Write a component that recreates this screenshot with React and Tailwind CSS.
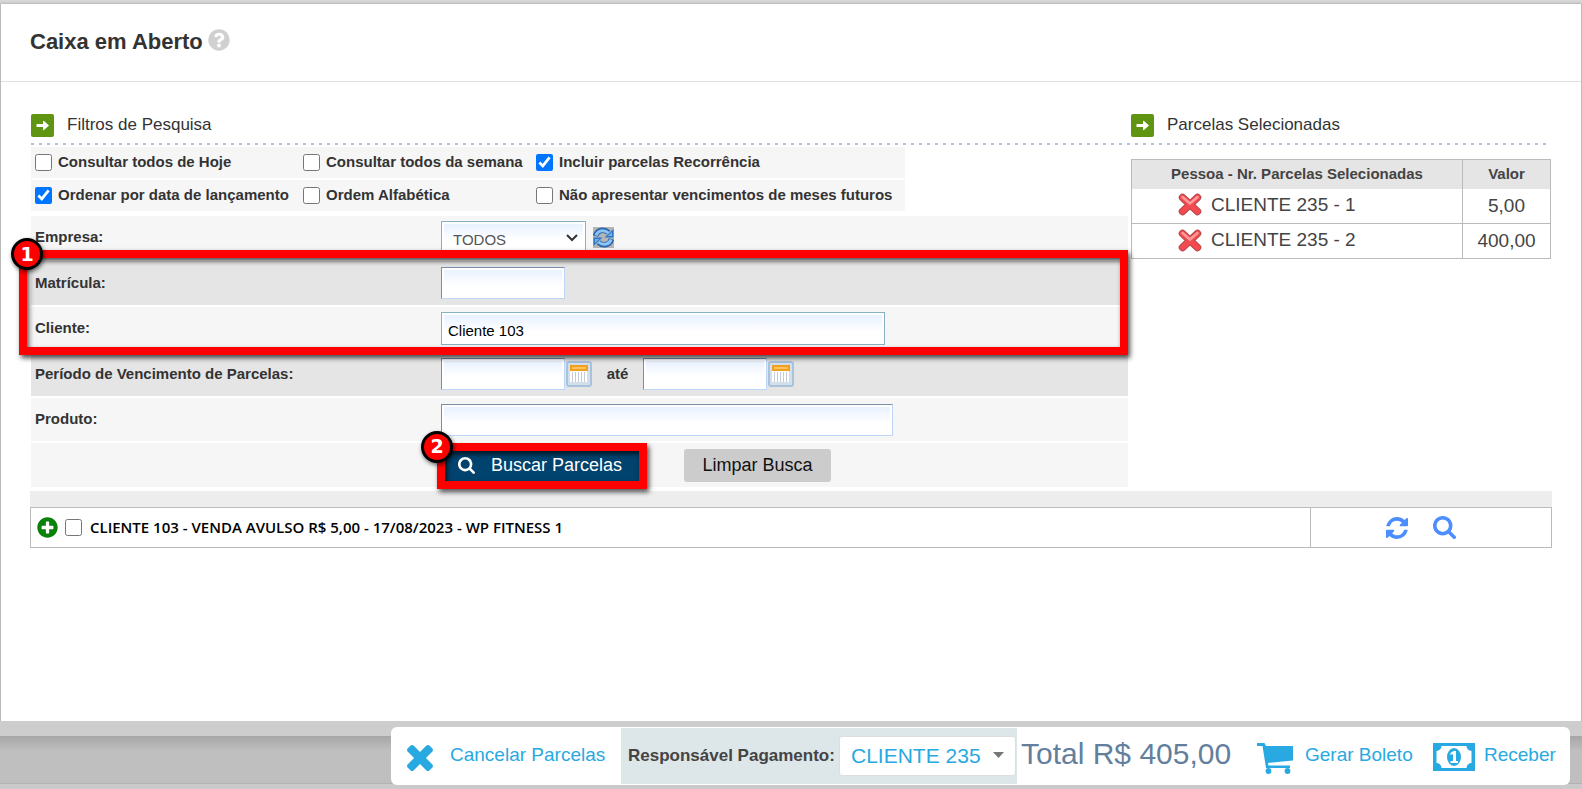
import React, { useState } from 'react';
import { FaQuestionCircle, FaPlusCircle } from 'react-icons/fa';

const selecionadas = [
  { id: 1, pessoa: 'CLIENTE 235 - 1', valor: '5,00' },
  { id: 2, pessoa: 'CLIENTE 235 - 2', valor: '400,00' },
];

const opcoes = [
  { id: 'hoje', label: 'Consultar todos de Hoje' },
  { id: 'semana', label: 'Consultar todos da semana' },
  { id: 'recorrencia', label: 'Incluir parcelas Recorrência' },
  { id: 'lancamento', label: 'Ordenar por data de lançamento' },
  { id: 'alfabetica', label: 'Ordem Alfabética' },
  { id: 'futuros', label: 'Não apresentar vencimentos de meses futuros' },
];

const inputClass =
  'h-8 border border-t-[#7b8ea8] border-l-[#7b8ea8] border-r-[#bed6f8] border-b-[#bed6f8] bg-linear-to-b from-[#e6f0ff] to-white to-60% px-[6px] pt-1 text-[15px] text-black shadow-[inset_0_0_0_2px_#fff] outline-none';

function SearchIcon({ className }) {
  return (
    <svg viewBox="0 128 1664 1664" className={className} fill="currentColor" aria-hidden="true">
      <path d="M1152 832q0-185-131.5-316.5t-316.5-131.5-316.5 131.5-131.5 316.5 131.5 316.5 316.5 131.5 316.5-131.5 131.5-316.5zm512 832q0 54-38 90-36 38-90 38-54 0-90-38l-343-342q-179 124-399 124-143 0-273.5-55.5t-225-150-150-225-55.5-273.5 55.5-273.5 150-225 225-150 273.5-55.5 273.5 55.5 225 150 150 225 55.5 273.5q0 220-124 399l343 343q37 37 37 90z" />
    </svg>
  );
}

function RefreshIcon({ className }) {
  return (
    <svg viewBox="0 128 1536 1536" className={className} fill="currentColor" aria-hidden="true">
      <path d="M1511 1056q0 5-1 7-64 268-268 434.5t-478 166.5q-146 0-282.5-55t-243.5-157l-129 129q-19 19-45 19t-45-19-19-45v-448q0-26 19-45t45-19h448q26 0 45 19t19 45-19 45l-137 137q71 66 161 102t187 36q134 0 250-65t186-179q11-17 53-117 8-23 30-23h192q13 0 22.5 9.5t9.5 22.5zm25-800v448q0 26-19 45t-45 19h-448q-26 0-45-19t-19-45 19-45l138-138q-148-137-349-137-134 0-250 65t-186 179q-11 17-53 117-8 23-30 23h-199q-13 0-22.5-9.5t-9.5-22.5v-7q65-268 270-434.5t480-166.5q146 0 284 55.5t245 156.5l130-129q19-19 45-19t45 19 19 45z" />
    </svg>
  );
}

function TimesIcon({ className }) {
  return (
    <svg viewBox="110 366 1188 1188" className={className} fill="currentColor" aria-hidden="true">
      <path d="M1298 1322q0 40-28 68l-136 136q-28 28-68 28t-68-28l-294-294-294 294q-28 28-68 28t-68-28l-136-136q-28-28-28-68t28-68l294-294-294-294q-28-28-28-68t28-68l136-136q28-28 68-28t68 28l294 294 294-294q28-28 68-28t68 28l136 136q28 28 28 68t-28 68l-294 294 294 294q28 28 28 68z" />
    </svg>
  );
}

function CartIcon({ className }) {
  return (
    <svg viewBox="0 0 36 31" className={className} fill="currentColor" aria-hidden="true">
      <path d="M0 0h7.500L9 3h27v14.500L11 20l.5 2.500H33V25H9L5.500 3H0z" />
      <circle cx="11.500" cy="28" r="2.900" />
      <circle cx="30.500" cy="28" r="2.900" />
    </svg>
  );
}

function MoneyIcon({ className }) {
  return (
    <svg viewBox="0 0 42 28" className={className} aria-hidden="true">
      <path fill="currentColor" d="M0 0h42v28H0z" />
      <path fill="#fff" d="M8.500 3h25a5 5 0 0 0 5 5v12a5 5 0 0 0-5 5h-25a5 5 0 0 0-5-5V8a5 5 0 0 0 5-5z" />
      <ellipse cx="21" cy="14" rx="7" ry="9" fill="currentColor" />
      <path fill="#fff" d="M20.500 8h2.500v10h2v2h-7.500v-2h2.500v-7l-2.500 1v-2z" />
    </svg>
  );
}

function CalendarIcon() {
  return (
    <svg viewBox="0 0 26 26" className="size-[26px]" aria-hidden="true">
      <rect x="1" y="1" width="24" height="24" rx="2" fill="#d3dfeb" stroke="#a9c3dd" strokeWidth="2" />
      <path fill="#fff" d="M4 10h17v11H4z" />
      <path stroke="#c3cad3" strokeWidth="1" d="M6.500 11v10M9.500 11v10M12.500 11v10M15.500 11v10M18.500 11v10" />
      <path fill="#f0a01e" d="M4 4h18v6H4z" />
      <path fill="#fac45a" d="M6 6h14v2H6z" />
    </svg>
  );
}

function RedCross() {
  return (
    <svg viewBox="0 0 24 23" className="h-[23px] w-6" aria-hidden="true">
      <g fill="none" strokeLinecap="round">
        <path d="M4.500 4.500 19.500 18.500M19.500 4.500 4.500 18.500" stroke="#b5474a" strokeWidth="7.500" />
        <path d="M4.500 4.500 19.500 18.500M19.500 4.500 4.500 18.500" stroke="#f24a50" strokeWidth="5.500" />
        <path d="m4.500 4 7.500 6.500L19.500 4" stroke="#ff9a9a" strokeWidth="2.500" />
      </g>
    </svg>
  );
}

function SectionTitle({ children }) {
  return (
    <div className="flex h-[23px] items-center gap-[13px]">
      <svg viewBox="0 0 23 23" className="size-[23px]" aria-hidden="true">
        <rect width="23" height="23" rx="2" fill="#5f9512" />
        <path fill="#fff" d="M6 10h6V7.500q0-1 1-.5l5 4.500-5 4.500q-1 .5-1-.5V13H6q-.5 0-.5-.5v-2q0-.5.5-.5z" />
      </svg>
      <h2 className="pb-0.5 text-[17px] leading-5 text-[#333]">{children}</h2>
    </div>
  );
}

function Marker({ n, className }) {
  return (
    <span className={`absolute -top-5 flex size-8 items-center justify-center rounded-full border-[3px] border-black bg-[#f00] font-['DejaVu_Sans',sans-serif] text-[19px] font-bold text-white shadow-[1px_2px_4px_rgba(0,0,0,0.6)] ${className}`}>
      {n}
    </span>
  );
}

const frameClass =
  'pointer-events-none absolute border-8 border-[#f00] shadow-[2px_3px_5px_rgba(0,0,0,0.7),inset_2px_3px_5px_rgba(0,0,0,0.7)]';

function Row({ label, htmlFor, dark, children }) {
  return (
    <div className={`grid grid-cols-[406px_1fr] items-center pl-1 ${dark ? 'h-11 bg-[#e5e5e5]' : 'h-[43px] bg-[#f6f6f6]'}`}>
      <label htmlFor={htmlFor} className="text-[15px] font-bold">{label}</label>
      <div className="flex items-center">{children}</div>
    </div>
  );
}

export default function App() {
  const [marcados, setMarcados] = useState({ recorrencia: true, lancamento: true });
  const [form, setForm] = useState({ empresa: 'TODOS', matricula: '', cliente: 'Cliente 103', inicio: '', fim: '', produto: '' });

  const change = (e) => setForm({ ...form, [e.target.name]: e.target.value });
  const limpar = () => setForm({ empresa: 'TODOS', matricula: '', cliente: '', inicio: '', fim: '', produto: '' });

  return (
    <div className="flex min-h-screen flex-col bg-[#d8d8d8] pt-1 font-['Liberation_Sans',Arial,sans-serif] text-[#333]">
      <main className="flex-1 border-x border-[#bbb] bg-white shadow-[0_0_3px_rgba(0,0,0,0.3)]">
        <header className="flex h-[78px] items-center gap-[5px] border-b border-[#e0e0e0] px-[29px] pb-0.5">
          <h1 className="text-[22px] font-bold">Caixa em Aberto</h1>
          <button type="button" aria-label="Ajuda" className="pb-1 text-[#d0d0d0]">
            <FaQuestionCircle className="size-[22px]" />
          </button>
        </header>

        <div className="px-[30px] pt-8">
          <div className="grid grid-cols-[1fr_420px] gap-x-[3px]">
            <SectionTitle>Filtros de Pesquisa</SectionTitle>
            <SectionTitle>Parcelas Selecionadas</SectionTitle>
          </div>
          <div className="mt-1.5 mb-0.5 h-0.5 bg-[repeating-linear-gradient(to_right,#b0c4d8_0_3px,transparent_3px_8px)]" />

          <div className="grid grid-cols-[1fr_420px] items-start gap-x-[3px]">
            <form className="flex flex-col gap-0.5" onSubmit={(e) => e.preventDefault()}>
              <div className="mb-[3px] flex w-[874px] flex-col gap-0.5">
                {[opcoes.slice(0, 3), opcoes.slice(3)].map((linha, i) => (
                  <div key={i} className="grid h-[31px] grid-cols-[268px_233px_1fr] items-center bg-[#f6f6f6] pl-1">
                    {linha.map((o) => (
                      <label key={o.id} className="flex items-center gap-1.5 text-[15px] font-bold whitespace-nowrap">
                        <input
                          type="checkbox"
                          className="size-[17px]"
                          checked={!!marcados[o.id]}
                          onChange={(e) => setMarcados({ ...marcados, [o.id]: e.target.checked })}
                        />
                        {o.label}
                      </label>
                    ))}
                  </div>
                ))}
              </div>

              <Row label="Empresa:" htmlFor="empresa">
                <div className="relative">
                  <select
                    id="empresa"
                    name="empresa"
                    value={form.empresa}
                    onChange={change}
                    className="h-[33px] w-[145px] appearance-none border border-[#8ab0c4] bg-linear-to-b from-[#e6f0ff] to-white to-60% pt-1.5 pl-[11px] text-[15px] text-[#555] shadow-[inset_0_0_0_2px_#fff]"
                  >
                    <option>TODOS</option>
                  </select>
                  <svg viewBox="0 0 12 8" className="pointer-events-none absolute top-[13px] right-2 h-2 w-3" aria-hidden="true">
                    <path d="m1 1 5 5 5-5" fill="none" stroke="#333" strokeWidth="2" />
                  </svg>
                </div>
                <button type="button" aria-label="Atualizar empresas" className="ml-[7px]">
                  <svg viewBox="0 0 21 21" className="size-[21px]" aria-hidden="true">
                    <rect width="21" height="21" fill="#b5b5b5" />
                    <g fill="none" stroke="#2a66ad" strokeWidth="5.500">
                      <path d="M2.500 9C4 3 11 1.500 15.500 5.500" />
                      <path d="M18.500 12C17 18 10 19.500 5.500 15.500" />
                    </g>
                    <path d="M20.500 2v8.500h-9zM.5 19v-8.500h9z" fill="#2f78c8" />
                    <g fill="none" stroke="#8cc4f5" strokeWidth="3">
                      <path d="M3 8.500C4.500 3.500 11 2 15.500 6" />
                      <path d="M18 12.500C16.500 17.500 10 19 5.500 15" />
                    </g>
                    <path d="M19 5v4h-4.500zM2 16v-4h4.500z" fill="#6fb0ee" />
                  </svg>
                </button>
              </Row>

              <div className="relative flex flex-col gap-0.5">
                <Row label="Matrícula:" htmlFor="matricula" dark>
                  <input id="matricula" name="matricula" value={form.matricula} onChange={change} className={`${inputClass} w-[124px]`} />
                </Row>
                <Row label="Cliente:" htmlFor="cliente">
                  <input
                    id="cliente"
                    name="cliente"
                    value={form.cliente}
                    onChange={change}
                    className="h-[33px] w-[444px] border border-[#8ab0c4] bg-linear-to-b from-[#e6f0ff] to-white to-60% px-[6px] pt-1 text-[15px] text-black shadow-[inset_0_0_0_2px_#fff] outline-none"
                  />
                </Row>
                <div className={`${frameClass} -top-[11px] right-0 -bottom-[5px] -left-3 z-10`}>
                  <Marker n={1} className="-left-4" />
                </div>
              </div>

              <Row label="Período de Vencimento de Parcelas:" htmlFor="inicio" dark>
                <input id="inicio" name="inicio" value={form.inicio} onChange={change} className={`${inputClass} w-[124px]`} />
                <button type="button" aria-label="Escolher data inicial" className="ml-px"><CalendarIcon /></button>
                <label htmlFor="fim" className="w-[51px] text-center text-[15px] font-bold">até</label>
                <input id="fim" name="fim" value={form.fim} onChange={change} className={`${inputClass} w-[124px]`} />
                <button type="button" aria-label="Escolher data final" className="ml-px"><CalendarIcon /></button>
              </Row>

              <Row label="Produto:" htmlFor="produto">
                <input id="produto" name="produto" value={form.produto} onChange={change} className={`${inputClass} w-[452px]`} />
              </Row>

              <div className="flex h-11 items-center gap-[41px] bg-[#f6f6f6] pl-[410px]">
                <div className="relative">
                  <button type="submit" className="flex h-[33px] w-[202px] items-center gap-4 rounded-[3px] bg-[#00436e] pl-[17px] text-lg text-white">
                    <SearchIcon className="size-[17px]" />
                    Buscar Parcelas
                  </button>
                  <div className={`${frameClass} -inset-x-1 -top-1.5 -bottom-[7px] z-10`}>
                    <Marker n={2} className="-left-6" />
                  </div>
                </div>
                <button type="button" onClick={limpar} className="h-[33px] w-[147px] rounded-[3px] bg-[#ccc] text-lg text-[#111]">
                  Limpar Busca
                </button>
              </div>
            </form>

            <table className="mt-3 w-full border-collapse text-center text-[#444]">
              <thead>
                <tr className="h-[29px] bg-[#e5e5e5] text-[15px]">
                  <th className="border border-b-0 border-[#bbb] font-bold">Pessoa - Nr. Parcelas Selecionadas</th>
                  <th className="w-[88px] border border-b-0 border-[#bbb] font-bold">Valor</th>
                </tr>
              </thead>
              <tbody>
                {selecionadas.map((p) => (
                  <tr key={p.id} className="h-[35px] text-[19px]">
                    <td className="border border-t-0 border-[#bbb] pb-0.5">
                      <div className="flex items-center gap-[9px] pl-[46px] leading-7">
                        <button type="button" aria-label={`Remover ${p.pessoa}`}><RedCross /></button>
                        {p.pessoa}
                      </div>
                    </td>
                    <td className="border border-t-0 border-[#bbb]">{p.valor}</td>
                  </tr>
                ))}
              </tbody>
            </table>
          </div>

          <section className="-mx-px mt-1">
            <div className="h-4 bg-[#ededed]" />
            <div className="flex h-[41px] border border-[#bbb] text-black">
              <div className="flex flex-1 items-center px-[6px]">
                <button type="button" aria-label="Expandir" className="text-[#0a820a]">
                  <FaPlusCircle className="size-[21px]" />
                </button>
                <label className="ml-[7px] flex items-center gap-2 font-['Open_Sans',sans-serif] text-[15px] font-semibold">
                  <input type="checkbox" className="size-[17px]" />
                  CLIENTE 103 - VENDA AVULSO R$ 5,00 - 17/08/2023 - WP FITNESS 1
                </label>
              </div>
              <div className="flex w-[241px] items-center gap-[25px] border-l border-[#bbb] pl-[75px] text-[#4c8dff]">
                <button type="button" aria-label="Renegociar"><RefreshIcon className="size-[22px]" /></button>
                <button type="button" aria-label="Ver detalhes"><SearchIcon className="size-[23px]" /></button>
              </div>
            </div>
          </section>
        </div>
      </main>

      <footer className="relative flex h-[68px] items-start justify-end bg-[linear-gradient(to_bottom,#cdcdcd_15px,#a6a6a6_15px,#bfbfbf_30px,#bfbfbf_62px,#b3b3b3_62px,#b3b3b3_63px,#cacaca_63px)] pt-1.5 pr-3">
        <div className="flex h-[58px] w-[1179px] items-center overflow-hidden rounded-md bg-white text-[19px] text-[#29a9e1]">
          <button type="button" className="flex w-[230px] items-center gap-[17px] pb-0.5 pl-4">
            <TimesIcon className="mt-1.5 size-[26px]" />
            Cancelar Parcelas
          </button>
          <div className="flex h-14 w-[396px] items-center justify-between bg-[#dde6e8] pr-px pl-[7px]">
            <label htmlFor="responsavel" className="text-[17px] font-bold text-[#444]">Responsável Pagamento:</label>
            <div className="relative">
              <select id="responsavel" className="h-10 w-[177px] appearance-none rounded-[3px] border border-[#ddd] bg-white pl-[11px] text-[21px]">
                <option>CLIENTE 235</option>
              </select>
              <svg viewBox="0 0 11 6" className="pointer-events-none absolute top-4 right-3 h-1.5 w-[11px]" aria-hidden="true">
                <path d="M0 0h11L5.500 6z" fill="#777" />
              </svg>
            </div>
          </div>
          <output className="w-[240px] pb-1 pl-1 text-3xl whitespace-nowrap text-[#637f9d]">Total R$ 405,00</output>
          <button type="button" className="flex w-[176px] items-center gap-3 pb-0.5">
            <CartIcon className="mt-1.5 h-[31px] w-9" />
            Gerar Boleto
          </button>
          <button type="button" className="flex items-center gap-[9px] pb-0.5">
            <MoneyIcon className="mt-1 h-7 w-[42px]" />
            Receber
          </button>
        </div>
      </footer>
    </div>
  );
}
